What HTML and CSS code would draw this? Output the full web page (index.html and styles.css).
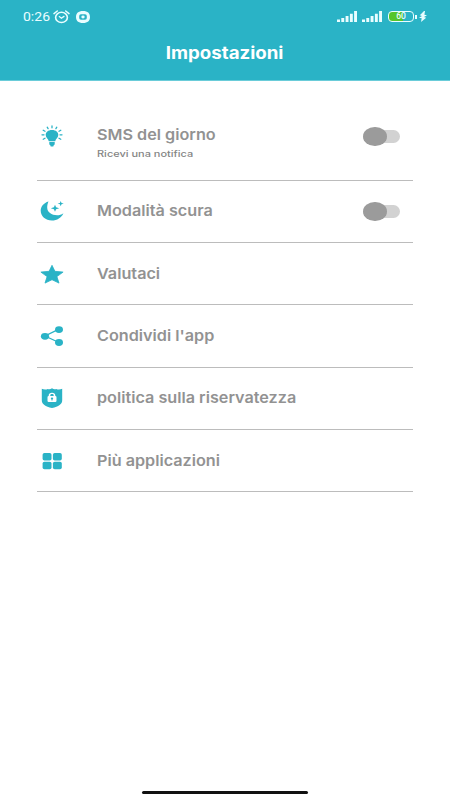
FILE: index.html
```html
<!DOCTYPE html>
<html lang="it">
<head>
<meta charset="utf-8">
<title>Impostazioni</title>
<link rel="stylesheet" href="styles.css">
</head>
<body>
<header class="header">
  <div class="status">
    <span class="clock">0:26</span>
    <svg class="alarm" width="17" height="14" viewBox="0 0 17 14"><g fill="none" stroke="currentColor" stroke-linecap="round"><ellipse cx="8.5" cy="7.4" rx="5.9" ry="5.1" stroke-width="1.6"/><path d="M1 3.6 4.3 1M16 3.6 12.7 1" stroke-width="1.5"/><path d="m6.3 6.6 2.1 1.6 2.6-1.8" stroke-width="1.3"/></g></svg>
    <svg class="record" width="14" height="12" viewBox="0 0 14 12"><path fill="currentColor" fill-rule="evenodd" d="M7 0c4.7 0 7 2.2 7 6s-2.300 6-7 6-7-2.200-7-6 2.300-6 7-6M5 3.200Q3.200 3.200 3.200 5v2q0 1.800 1.800 1.800h4q1.800 0 1.800-1.800V5q0-1.800-1.800-1.800z"/><ellipse cx="7" cy="6" rx="1.700" ry="1.400" fill="currentColor"/></svg>
    <svg class="signal" width="20" height="11" viewBox="0 0 20 11"><path fill="currentColor" d="M0 8.500h3V11H0zM4.300 7h2.900v4H4.300zM8.600 5h2.900v6H8.600zM12.900 2.700h2.900V11h-2.900zM17.100 0H20v11h-2.900z"/></svg>
    <svg class="signal second" width="20" height="11" viewBox="0 0 20 11"><path fill="currentColor" d="M0 8.500h3V11H0zM4.300 7h2.900v4H4.300zM8.600 5h2.900v6H8.600zM12.900 2.700h2.900V11h-2.900zM17.100 0H20v11h-2.900z"/></svg>
    <span class="battery">60</span>
    <svg class="charge" width="8" height="11" viewBox="0 0 8 11"><path fill="currentColor" d="M5 0 .8 4.200l2.200.8L0 6.700l2.700.5L2 11l5.200-4.300-2.200-.8L8 4.200l-2.600-.5L6 0z"/></svg>
  </div>
  <h1 class="heading"><span>Impostazioni</span></h1>
</header>
<main class="list">
  <section class="row first">
    <svg class="icon" viewBox="0 0 24 22"><path d="M12 4.900c4 0 6.300 2.200 6.300 5.100 0 2.700-2.600 3.600-3.100 6.300H8.800c-.5-2.700-3.100-3.600-3.100-6.300 0-2.900 2.300-5.100 6.300-5.100M9.300 16.900h5.400v2.200q0 1.100-1 1.200l-.4 1.100h-2.600l-.4-1.100q-1-.1-1-1.200z"/><path class="line" d="M12 1v1.800M7.200 2.200l.9 1.400M16.800 2.200l-.9 1.400M3.200 5.200l1.800 1M20.800 5.200l-1.800 1M2 9.800h2M20 9.800h2M3.200 14.300l1.800-1M20.800 14.300l-1.800-1"/></svg>
    <div class="label"><span class="title">SMS del giorno</span><span class="note">Ricevi una notifica</span></div>
    <span class="switch"></span>
  </section>
  <section class="row">
    <svg class="icon" viewBox="0 0 24 22"><path d="M8.500 1.500C3.800 2.800.7 6.500.7 10.800c0 5.500 4.800 9.700 11.200 9.700 5.100 0 9.600-2.700 11.500-7.300-2 1.400-4 2-6.300 2-5.600 0-9.900-3-9.900-7.700 0-2.100.4-4.200 1.300-6M15 4.700l1.100 2.500 3.100 1-3.100 1-1.100 2.500-1.100-2.500-3.100-1 3.100-1zM20.700 1l.8 1.900 2.300.7-2.300.7-.8 1.900-.8-1.900-2.300-.7 2.300-.7z"/></svg>
    <div class="label"><span class="title">Modalità scura</span></div>
    <span class="switch"></span>
  </section>
  <section class="row">
    <svg class="icon" viewBox="0 0 24 22"><path stroke="currentColor" stroke-width=".8" stroke-linejoin="round" d="m12 2.300 2.900 6 8.200.8-6.200 4.500 2.100 6.500-7-3.400-7 3.400 2.100-6.500L.9 9.100l8.200-.8z"/></svg>
    <div class="label"><span class="title">Valutaci</span></div>
  </section>
  <section class="row">
    <svg class="icon" viewBox="0 0 24 22"><path class="line" d="M19 4.200 5 11l14 6.500"/><ellipse cx="19" cy="4.600" rx="4" ry="3.400"/><ellipse cx="5" cy="11.300" rx="4.100" ry="3.400"/><ellipse cx="19" cy="17.500" rx="4" ry="3.400"/></svg>
    <div class="label"><span class="title">Condividi l'app</span></div>
  </section>
  <section class="row">
    <svg class="icon" viewBox="0 0 24 22"><path fill-rule="evenodd" d="M1.800 1.700c2 1 4.200 1 6 .2q2 .8 4.200-.7 2.200 1.500 4.200.7c1.800.8 4 .8 6-.2v11.500c0 4-3.500 6.300-10.200 7.800C5.300 19.500 1.800 17.200 1.800 13.200zM8.700 9q-1.200 0-1.200 1.200v3.600q0 1.200 1.200 1.200h6.600q1.200 0 1.200-1.200v-3.600Q16.500 9 15.300 9V8.500c0-1.900-1.300-2.800-3.300-2.800s-3.300.9-3.300 2.800zm1.600 0v-.5c0-.9.6-1.400 1.700-1.400s1.700.5 1.700 1.400V9z"/><ellipse cx="12" cy="11.400" rx="1.200" ry=".9"/><path d="M11.500 11.500h1v2h-1z"/></svg>
    <div class="label"><span class="title">politica sulla riservatezza</span></div>
  </section>
  <section class="row">
    <svg class="icon" viewBox="0 0 24 22"><rect x="2.600" y="3" width="8.900" height="7.500" rx="1.800"/><rect x="12.900" y="3" width="8.900" height="7.500" rx="1.800"/><rect x="2.600" y="11.700" width="8.900" height="7.500" rx="1.800"/><rect x="12.900" y="11.700" width="8.900" height="7.500" rx="1.800"/></svg>
    <div class="label"><span class="title">Più applicazioni</span></div>
  </section>
</main>
<div class="home"></div>
</body>
</html>
```
FILE: styles.css
```css
* { box-sizing: border-box; }
body {
  margin: 0;
  height: 800px;
  display: flex;
  flex-direction: column;
  background: #fff;
  font-family: Inter, "Liberation Sans", sans-serif;
  overflow: hidden;
}
svg { display: block; flex: none; }
.header { height: 81px; background: #2ab3c6; color: #e9fdff; border-bottom: 1px solid #6accd9; }
.status { height: 33px; display: flex; align-items: center; padding: 0 0 0 23px; }
.clock { flex: none; font: 400 12.5px/14px Roboto, sans-serif; width: 25px; transform: scaleX(1.12); transform-origin: left; }
.alarm { margin-left: 5px; }
.record { margin-left: 6px; }
.signal { margin-left: 247px; }
.signal.second { margin-left: 5px; }
.battery {
  position: relative;
  flex: none;
  width: 26px;
  height: 11px;
  margin-left: 6px;
  border: 1.5px solid #e9fdff;
  border-radius: 4px;
  background: linear-gradient(90deg, #55c52c 57%, #2ab3c6 57%);
  font: 500 8.5px/9px Roboto, sans-serif;
  text-align: center;
}
.battery::after { content: ""; position: absolute; right: -3.5px; top: 2.5px; width: 1.5px; height: 4px; background: #e9fdff; }
.charge { margin-left: 5px; }
.heading { margin: 8px 0 0; text-align: center; font-size: 17px; line-height: 24px; font-weight: 700; color: #fff; }
.heading span { display: inline-block; transform: scaleX(1.1); }
.list { padding: 0 37px; flex: 1; }
.row { height: 62.3px; display: flex; align-items: center; padding-left: 3px; border-bottom: 1px solid #bcbcbc; }
.first { height: 99.7px; padding-top: 12px; }
.first .label { padding-top: 13px; }
.icon { width: 24px; height: 22px; color: #2ab3c6; fill: currentColor; }
.line { fill: none; stroke: currentColor; stroke-width: 1.3; stroke-linecap: round; }
.label { margin-left: 33px; flex: 1; display: flex; flex-direction: column; align-items: flex-start; color: #929292; }
.title, .note { white-space: nowrap; transform-origin: left; }
.title { font-size: 15px; line-height: 20px; font-weight: 600; transform: scaleX(1.08); }
.note { font-size: 9px; line-height: 12px; font-weight: 500; margin-top: 3px; transform: scaleX(1.22); color: #858585; }
.switch { position: relative; width: 30px; height: 13px; margin-right: 13px; border-radius: 7px; background: #d2d2d2; }
.switch::before { content: ""; position: absolute; left: -7px; top: -3px; width: 24px; height: 19.5px; border-radius: 50%; background: #9b9b9b; }
.home { width: 166px; height: 3px; margin: 0 auto 6px; border-radius: 2px; background: #111; }
```
